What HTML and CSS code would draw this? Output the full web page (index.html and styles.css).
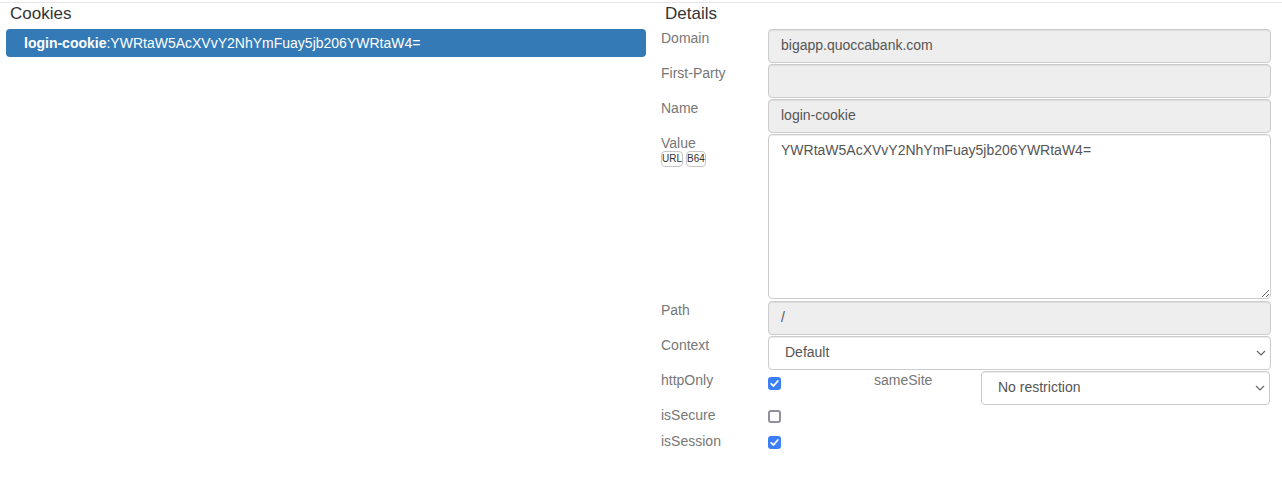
FILE: index.html
```html
<!DOCTYPE html>
<html>
<head>
<meta charset="utf-8">
<link rel="stylesheet" href="styles.css">
</head>
<body>
<div class="page">
  <div class="cookies-panel">
    <div class="panel-title">Cookies</div>
    <ul class="cookie-list">
      <li class="cookie-item active"><b>login-cookie</b>:YWRtaW5AcXVvY2NhYmFuay5jb206YWRtaW4=</li>
    </ul>
  </div>
  <div class="details-panel">
    <div class="panel-title">Details</div>
    <div class="row">
      <div class="label">Domain</div>
      <input class="field" type="text" readonly value="bigapp.quoccabank.com">
    </div>
    <div class="row">
      <div class="label">First-Party</div>
      <input class="field" type="text" readonly value="">
    </div>
    <div class="row">
      <div class="label">Name</div>
      <input class="field" type="text" readonly value="login-cookie">
    </div>
    <div class="row">
      <div class="label">Value
        <div class="badges"><span class="badge">URL</span><span class="badge">B64</span></div>
      </div>
      <textarea class="field area">YWRtaW5AcXVvY2NhYmFuay5jb206YWRtaW4=</textarea>
    </div>
    <div class="row">
      <div class="label">Path</div>
      <input class="field" type="text" readonly value="/">
    </div>
    <div class="row">
      <div class="label">Context</div>
      <div class="select-wrap">
        <select class="field select"><option>Default</option></select>
        <svg class="chev" width="10" height="6" viewBox="0 0 10 6"><polyline points="1,1 5,5 9,1" fill="none" stroke="#666" stroke-width="1.2"/></svg>
      </div>
    </div>
    <div class="row">
      <div class="label">httpOnly</div>
      <div class="check-cell first">
        <span class="cbox on"><svg width="13" height="13" viewBox="0 0 13 13"><polyline points="3.2,6.8 5.5,9 9.8,4" fill="none" stroke="#fff" stroke-width="1.8" stroke-linecap="round" stroke-linejoin="round"/></svg></span>
      </div>
      <div class="label">sameSite</div>
      <div class="select-wrap samesite">
        <select class="field select"><option>No restriction</option></select>
        <svg class="chev" width="10" height="6" viewBox="0 0 10 6"><polyline points="1,1 5,5 9,1" fill="none" stroke="#666" stroke-width="1.2"/></svg>
      </div>
    </div>
    <div class="row small">
      <div class="label">isSecure</div>
      <div class="check-cell">
        <span class="cbox off"></span>
      </div>
    </div>
    <div class="row small">
      <div class="label">isSession</div>
      <div class="check-cell">
        <span class="cbox on"><svg width="13" height="13" viewBox="0 0 13 13"><polyline points="3.2,6.8 5.5,9 9.8,4" fill="none" stroke="#fff" stroke-width="1.8" stroke-linecap="round" stroke-linejoin="round"/></svg></span>
      </div>
    </div>
  </div>
</div>
</body>
</html>
```
FILE: styles.css
```css
html, body {
  margin: 0;
  padding: 0;
  background: #fff;
}
body {
  font-family: "Liberation Sans", Arial, sans-serif;
  font-size: 14px;
  line-height: 20px;
  color: #333;
}
.page {
  margin-top: 2px;
  border-top: 1px solid #e6e6e6;
  display: flex;
  align-items: flex-start;
}
.cookies-panel {
  width: 640px;
  margin-left: 6px;
}
.details-panel {
  width: 610px;
  margin-left: 15px;
}
.panel-title {
  font-size: 17px;
  line-height: 22px;
  padding-left: 4px;
  color: #333;
  margin-bottom: 4px;
}
.cookie-list {
  list-style: none;
  margin: 0;
  padding: 0;
}
.cookie-item {
  padding: 4px 18px;
  border-radius: 4px;
  line-height: 20px;
}
.cookie-item.active {
  background: #337ab7;
  color: #fff;
}
.row {
  display: flex;
  align-items: flex-start;
  margin-bottom: 1px;
}
.label {
  width: 107px;
  flex: none;
  color: #777;
  line-height: 20px;
  margin-top: -1px;
}
.field {
  box-sizing: border-box;
  width: 503px;
  height: 34px;
  margin: 0;
  padding: 5px 12px 7px;
  font-family: "Liberation Sans", Arial, sans-serif;
  font-size: 14px;
  line-height: 20px;
  color: #555;
  background: #eee;
  border: 1px solid #ccc;
  border-radius: 4px;
  box-shadow: inset 0 1px 1px rgba(0,0,0,.075);
  outline: none;
}
.area {
  height: 165px;
  background: #fff;
  resize: vertical;
  margin-bottom: 1px;
}
.select-wrap {
  position: relative;
  width: 503px;
  height: 34px;
}
.select {
  -webkit-appearance: none;
  appearance: none;
  width: 100%;
  background: #fff;
  padding: 5px 24px 7px 16px;
}
.chev {
  position: absolute;
  right: 5px;
  top: 14px;
  pointer-events: none;
}
.select-wrap.samesite {
  width: 289px;
}
.badges {
  display: flex;
  gap: 3px;
  margin-top: -2px;
}
.badge {
  font-size: 10px;
  line-height: 14px;
  padding: 0;
  border: 1px solid #c4c4c4;
  border-radius: 4px;
  color: #333;
}
.check-cell {
  width: 106px;
  flex: none;
  display: flex;
  padding-top: 4px;
}
.check-cell.first {
  padding-top: 6px;
}
.cbox {
  box-sizing: border-box;
  display: block;
  width: 13px;
  height: 13px;
  border-radius: 3px;
}
.cbox svg {
  display: block;
}
.cbox.on {
  background: #3a7ff6;
}
.cbox.off {
  border: 2px solid #8f8f9d;
  background: #fff;
}
.row.small {
  height: 26px;
  margin-bottom: 0;
}
```
